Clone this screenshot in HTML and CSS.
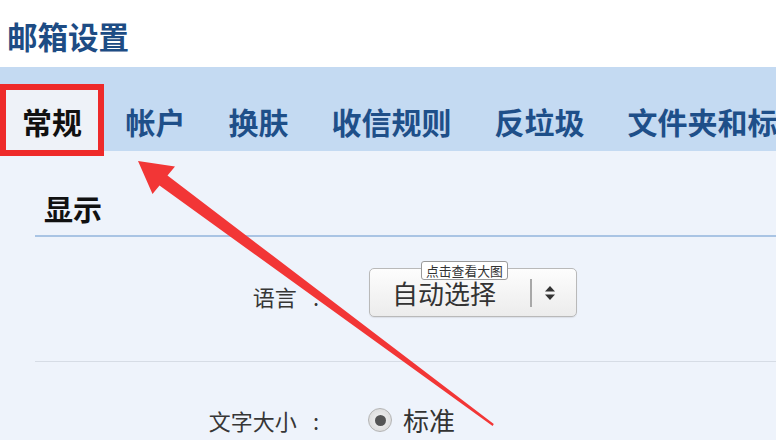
FILE: index.html
```html
<!DOCTYPE html>
<html lang="zh-CN">
<head>
  <meta charset="utf-8">
  <title>邮箱设置</title>
  <link rel="stylesheet" href="styles.css">
</head>
<body>
  <div id="page">
    <div id="header">
      <h1>邮箱设置</h1>
    </div>

    <ul id="tabs">
      <li class="tab active">常规</li>
      <li class="tab">帐户</li>
      <li class="tab">换肤</li>
      <li class="tab">收信规则</li>
      <li class="tab">反垃圾</li>
      <li class="tab">文件夹和标签</li>
    </ul>

    <div id="content">
      <div class="section">
        <h2>显示</h2>

        <div class="row first">
          <label class="label">语言<span class="colon">:</span></label>
          <div class="select">
            <span class="select-text">自动选择</span>
            <span class="select-sep"></span>
            <svg class="select-arrows" width="12" height="16" viewBox="0 0 12 16">
              <polygon points="6,1 11,6.5 1,6.5" fill="#333"/>
              <polygon points="6,15 11,9.5 1,9.5" fill="#333"/>
            </svg>
          </div>
        </div>

        <div class="row">
          <label class="label">文字大小<span class="colon">:</span></label>
          <span class="radio"><span class="dot"></span></span>
          <span class="radio-text">标准</span>
        </div>
      </div>
    </div>

    <!-- screenshot annotation -->
    <div class="tooltip">点击查看大图</div>
    <svg class="arrow" width="776" height="440" viewBox="0 0 776 440">
      <polygon fill="#f23636"
        points="138,161 175,166.5 167.5,175.5 493.8,424 492.6,426 159.5,185.5 152.5,194"/>
    </svg>
  </div>
</body>
</html>
```

FILE: styles.css
```css
body {
  margin: 0;
  font-family: "Noto Sans CJK SC", "Noto Sans", sans-serif;
  color: #333;
}
#page {
  position: relative;
  width: 776px;
  height: 440px;
  overflow: hidden;
  background: #eef3fb;
}

#header {
  height: 67px;
  box-sizing: border-box;
  padding: 17px 0 0 7px;
  background: #fff;
}
#header h1 {
  margin: 0;
  font-size: 30.5px;
  line-height: 38px;
  font-weight: bold;
  color: #1d4c84;
}

#tabs {
  display: flex;
  height: 84px;
  box-sizing: border-box;
  margin: 0;
  padding: 17px 0 0;
  list-style: none;
  white-space: nowrap;
  background: #c4daf2;
}
.tab {
  flex: none;
  height: 72px;
  box-sizing: border-box;
  padding: 0 15.5px;
  border: 6px solid transparent;
  font-size: 30px;
  line-height: 62px;
  font-weight: bold;
  color: #1e4f89;
}
.tab.active {
  position: relative;
  z-index: 1;
  padding: 0 16px 0 16px;
  color: #111;
  background: #eef2f8;
  border-color: #ee2a2a;
}

#content {
  padding: 0 0 0 35px;
}
.section h2 {
  margin: 0;
  padding: 40px 0 10px 9px;
  font-size: 29px;
  line-height: 34px;
  font-weight: bold;
  color: #111;
  border-bottom: 2px solid #a9c4e4;
}

.row {
  display: flex;
  align-items: center;
  padding: 43px 0 0;
}
.row.first {
  padding: 31px 0 44px;
  border-bottom: 1px solid #d6dce5;
}
.label {
  width: 284px;
  text-align: right;
  font-size: 22px;
  line-height: 30px;
  color: #363636;
  padding-top: 6px;
}
.row + .row .label {
  padding-top: 0;
}
.colon {
  margin-left: 16px;
}

.select {
  display: flex;
  align-items: center;
  margin-left: 50px;
  width: 208px;
  height: 49px;
  box-sizing: border-box;
  border: 1px solid #b9b9b9;
  border-radius: 5px;
  background: linear-gradient(#fdfdfd, #ececec);
  box-shadow: 0 1px 1px rgba(0, 0, 0, 0.08);
}
.select-text {
  padding-left: 22px;
  width: 138px;
  font-size: 26px;
  line-height: 30px;
  color: #333;
}
.select-sep {
  width: 2px;
  height: 28px;
  background: #a8a8a8;
}
.select-arrows {
  margin-left: 12px;
}

.radio {
  display: flex;
  align-items: center;
  justify-content: center;
  margin-left: 49px;
  width: 24px;
  height: 24px;
  box-sizing: border-box;
  border: 1px solid #b4b4b4;
  border-radius: 50%;
  background: radial-gradient(#f4f4f4, #d6d6d6);
}
.radio .dot {
  width: 11px;
  height: 11px;
  border-radius: 50%;
  background: #555;
}
.radio-text {
  margin-left: 11px;
  font-size: 26px;
  line-height: 30px;
  color: #333;
}

.tooltip {
  position: absolute;
  left: 421px;
  top: 261px;
  padding: 0 4px;
  font-size: 12.8px;
  line-height: 17px;
  color: #333;
  background: #fff;
  border: 1px solid #9a9a9a;
  border-radius: 3px;
}
.arrow {
  position: absolute;
  left: 0;
  top: 0;
  pointer-events: none;
}
```
